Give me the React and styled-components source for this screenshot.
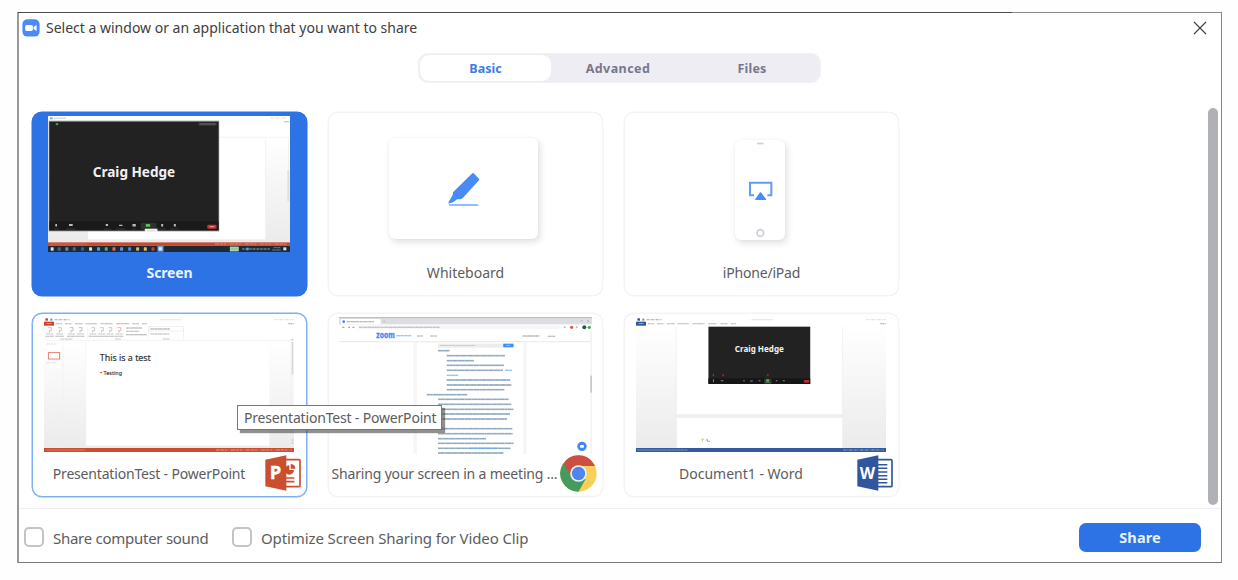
import React from "react";
import styled, { createGlobalStyle } from "styled-components";

const GlobalStyle = createGlobalStyle`
  * { box-sizing: border-box; }
  body { margin: 0; background: #fefefe; font-family: "Noto Sans", "Open Sans", sans-serif; color: #4f4f4f; }
`;

const Page = styled.div`
  width: 1238px;
  height: 580px;
  padding: 12px 16px 16px 17px;
  overflow: hidden;
`;

const Dialog = styled.section`
  width: 1205px;
  height: 551px;
  display: flex;
  flex-direction: column;
  background: #fff;
  border-left: 2px solid #999;
  border-right: 1px solid #868686;
  border-bottom: 1px solid #777;
`;

const TopEdge = styled.div`
  height: 1px;
  flex: none;
  margin-left: -1px;
  background: linear-gradient(90deg, #4c4c4c 994px, #898989 994px);
`;

const TitleBar = styled.header`
  height: 30px;
  flex: none;
  display: flex;
  align-items: center;
  padding: 0 14px 0 3px;
`;

const Text = styled.span`
  font-size: ${(p) => p.$size || 14}px;
  line-height: 20px;
  letter-spacing: ${(p) => p.$track || 0}px;
  font-weight: ${(p) => (p.$bold ? 700 : 400)};
  color: ${(p) => p.$color || "#5c5c60"};
  white-space: nowrap;
`;

const Title = styled(Text)`
  margin-left: 6px;
  flex: 1;
`;

const TabBar = styled.nav`
  width: 403px;
  height: 30px;
  flex: none;
  margin: 10px 0 0 399px;
  padding: 1px;
  display: flex;
  border-radius: 10px;
  background: #ededf3;
  border: 1px solid #f1f1f6;
`;

const Tab = styled.div`
  width: ${(p) => (p.$active ? 131 : 134)}px;
  padding-top: 2px;
  display: flex;
  justify-content: center;
  align-items: center;
  border-radius: 9px;
  background: ${(p) => (p.$active ? "#fff" : "transparent")};
`;

const Body = styled.main`
  height: 426px;
  flex: none;
  display: flex;
  justify-content: space-between;
  padding: 29px 3px 0 13px;
  border-bottom: 1px solid #efeff4;
`;

const Grid = styled.div`
  display: grid;
  grid-template-columns: repeat(3, 275px);
  grid-auto-rows: 184px;
  gap: 17px 21px;
`;

const CARD = {
  selected: ["#2d73e5", "#2d73e5"],
  hover: ["#fff", "#7fb0f0"],
  plain: ["#fff", "#f4f4f6"],
};

const Card = styled.article`
  display: flex;
  flex-direction: column;
  border-radius: 10px;
  background: ${(p) => CARD[p.$kind][0]};
  border: 1px solid ${(p) => CARD[p.$kind][1]};
  box-shadow: 0 0 0 0.5px ${(p) => CARD[p.$kind][1]};
`;

const Media = styled.div`
  height: 140px;
  flex: none;
  display: flex;
  justify-content: center;
  align-items: flex-start;
  padding-top: ${(p) => p.$top}px;
  padding-right: 1px;
  svg { display: block; }
`;

const Caption = styled.div`
  height: 38px;
  display: flex;
  align-items: center;
  padding-right: ${(p) => (p.$icon ? 5 : 0)}px;
  > span { flex: 1; text-align: center; padding-top: 1px; }
  svg { flex: none; }
`;

const Board = styled.div`
  width: 149px;
  height: 101px;
  margin-right: 3px;
  display: flex;
  align-items: center;
  justify-content: center;
  border-radius: 6px;
  background: #fff;
  box-shadow: 2px 3px 7px rgba(0, 0, 0, 0.13), 0 0 2px rgba(0, 0, 0, 0.06);
`;

const Phone = styled(Board)`
  width: 50px;
  height: 100px;
  margin-right: 2px;
`;

const ScrollThumb = styled.div`
  width: 10px;
  height: 397px;
  margin-top: -4px;
  border-radius: 5px;
  background: #b0b0b7;
`;

const Footer = styled.footer`
  flex: 1;
  display: flex;
  align-items: center;
  padding: 3px 20px 0 5px;
`;

const Check = styled.span`
  width: 20px;
  height: 20px;
  margin-right: 9px;
  border: 2px solid #c3c3c8;
  border-radius: 5px;
`;

const CheckLabel = styled.label`
  width: ${(p) => p.$w}px;
  display: flex;
  align-items: center;
  > span + span { padding-top: 2px; }
`;

const ShareButton = styled.button`
  width: 122px;
  height: 29px;
  margin-left: auto;
  padding: 0;
  border: 0;
  border-radius: 7px;
  background: #2d73e5;
  font-family: inherit;
  display: flex;
  align-items: center;
  justify-content: center;
`;

const Tooltip = styled.div`
  position: absolute;
  left: 237px;
  top: 405px;
  width: 205px;
  height: 25px;
  padding: 1px 0 0 6px;
  display: flex;
  align-items: center;
  background: #fff;
  border: 1px solid #777;
  box-shadow: 3px 3px 1px rgba(70, 70, 70, 0.6);
`;

const Dashes = ({ x, y, w, c = "#999", h = 3, d = "6 1 4 2 8 1 3 1" }) => (
  <g stroke={c} strokeWidth={h}>
    <path d={`M${x} ${y}h${w}`} opacity="0.35" />
    <path d={`M${x} ${y}h${w}`} strokeDasharray={d} opacity="0.65" />
  </g>
);

const ZoomIcon = () => (
  <svg width="18" height="18" viewBox="0 0 18 18">
    <rect x="0.4" y="0.2" width="17.2" height="17.4" rx="5" fill="#4a8bf5" />
    <rect x="3.2" y="6" width="7.6" height="6" rx="1.4" fill="#fff" />
    <path d="M11.5 8 14.6 6v6l-3.1-2z" fill="#fff" />
  </svg>
);

const CloseIcon = () => (
  <svg width="14" height="14" viewBox="0 0 14 14" stroke="#444" strokeWidth="1.2">
    <path d="M1 1 13 13M13 1 1 13" />
  </svg>
);

const PenIcon = () => (
  <svg width="33" height="38" viewBox="0 -6 99 114">
    <path
      d="M76 4Q78 2 80 4L96 20Q98 23 96 25L48 77Q43 82 38 82L30 82Q22 91 8 94Q2 96 5 90L17 69L18 61Z"
      fill="#468bf6"
    />
    <path d="M8 99H92" stroke="#70a8fa" strokeWidth="5" strokeLinecap="round" />
  </svg>
);

const PhoneArt = () => (
  <svg width="50" height="100" viewBox="0 0 150 300">
    <path d="M66 10.500H86" stroke="#cfcfdb" strokeWidth="5" />
    <path d="M57 166H45V128H109V166H97" fill="none" stroke="#5f9df9" strokeWidth="6" />
    <path d="M76 157Q78 157 80 160L93 177Q94 180 91 180H63Q60 180 61 177L73 160Q74 157 76 157Z" fill="#468bf6" />
    <circle cx="76" cy="279" r="10" fill="none" stroke="#cfcfdb" strokeWidth="5" />
  </svg>
);

const ScreenThumb = () => {
  const apps = [
    [82, "#ddd"], [103, "#566"], [126, "#789"], [148, "#567"], [173, "#1c6db0"], [197, "#e8e0c8"],
    [221, "#4ba1e8"], [244, "#4fae79"], [267, "#e36a50"], [290, "#5998e8"], [314, "#5687cf"],
    [338, "#cdbd68"], [361, "#e3bf62"], [384, "#b9492e"],
  ];
  return (
    <svg width="242" height="136" viewBox="70 31 725 409" preserveAspectRatio="none">
      <defs>
        <linearGradient id="slideBg" x2="0" y2="1">
          <stop offset="0" stopColor="#fff" />
          <stop offset="1" stopColor="#ebebeb" />
        </linearGradient>
      </defs>
      <rect x="70" y="31" width="725" height="409" fill="#fff" />
      <rect x="70" y="94" width="725" height="318" fill="url(#slideBg)" />
      <rect x="190" y="100" width="532" height="302" fill="#fff" />
      <path d="M584 95H795M722 100V402M791 100V400" stroke="#ececec" strokeWidth="2" />
      <rect x="787" y="194" width="6" height="94" fill="#dedede" />
      <rect x="76" y="35" width="8" height="6" fill="#77a9f5" />
      <Dashes x={88} y={38} w={36} c="#bbb" />
      <Dashes x={738} y={37} w={48} c="#ccc" d="4 14" />
      <Dashes x={777} y={48} w={16} c="#aaa" />
      <rect x="72" y="45" width="511" height="333" fill="#999" />
      <rect x="74" y="48" width="507" height="327" fill="#222" />
      <rect x="93" y="52" width="8" height="7" rx="3" fill="#35a444" />
      <rect x="521" y="51" width="54" height="9" fill="#3b3b3b" />
      <Dashes x={524} y={55} w={48} c="#777" />
      <text x="204" y="214" fontSize="41" fontWeight="700" fill="#f2f2f2" textLength="247" lengthAdjust="spacingAndGlyphs">Craig Hedge</text>
      <rect x="74" y="348" width="507" height="27" fill="#1a1a1a" />
      <rect x="348" y="352" width="47" height="20" fill="#303030" />
      <path d="M92 356h5v7h-5zM133 356h11v6h-11zM243 356h7v6h-7zM283 358h10v4h-10zM323 356h10v7h-10zM409 356h6v7h-6zM447 356h6v7h-6z" fill="#bbb" />
      <rect x="363" y="356" width="13" height="8" fill="#50ce55" />
      <path d="M88 371h14M124 371h29M237 371h22M273 371h28M321 371h12M400 371h23M436 371h26" stroke="#444" strokeWidth="2" />
      <rect x="547" y="358" width="28" height="12" rx="3" fill="#c92c32" />
      <path d="M554 364h14" stroke="#eaa" strokeWidth="3" />
      <rect x="360" y="370" width="38" height="11" fill="#f4f4f4" />
      <path d="M366 376h26" stroke="#ccc" strokeWidth="2" />
      <rect x="70" y="411" width="725" height="10" fill="#c9492b" />
      <Dashes x={76} y={416} w={112} c="#de8a75" h={2} />
      <Dashes x={570} y={416} w={215} c="#e29a88" h={3} d="12 3 9 3 6 12" />
      <rect x="70" y="421" width="725" height="19" fill="#1d2a36" />
      {apps.map(([x, c]) => <rect key={x} x={x - 4} y="426" width="9" height="10" rx="2" fill={c} />)}
      <rect x="398" y="422" width="18" height="17" fill="#6ba5df" />
      <rect x="402" y="426" width="9" height="9" fill="#e3f1fc" />
      <rect x="616" y="425" width="24" height="12" fill="#8fcf8b" stroke="#d4e6d6" strokeWidth="2" />
      <Dashes x={652} y={431} w={82} c="#8599aa" h={5} d="5 6" />
      <rect x="664" y="427" width="7" height="8" fill="#47a4ef" />
      <Dashes x={746} y={427} w={20} c="#bbb" h={2} />
      <Dashes x={742} y={434} w={26} c="#bbb" h={2} />
      <rect x="775" y="426" width="9" height="9" fill="#ddd" />
    </svg>
  );
};

const OfficeHead = ({ color, x0 }) => (
  <g>
    <rect x={x0 + 4} y="31" width="8" height="7" fill={color} />
    <rect x={x0 + 19} y="32" width="6" height="6" fill="#8d7bd0" />
    <Dashes x={x0 + 32} y={35} w={44} c="#8b93a5" d="7 7" />
    <rect x={x0} y="41" width="30" height="12" fill={color} />
    <Dashes x={x0 + 8} y={47} w={15} c="#fff" h={2} d="12 2" />
    {[[36, 18], [63, 19], [93, 23], [125, 34], [170, 35]].map(([x, w]) => (
      <Dashes key={x} x={x0 + x} y={47} w={w} c="#aaa" />
    ))}
    <Dashes x={x0 + 346} y={35} w={64} c="#ddd" />
    <Dashes x={x0 + 690} y={35} w={58} c="#ccc" d="4 14" />
    <Dashes x={x0 + 732} y={47} w={16} c="#999" />
  </g>
);

const SlideThumb = () => (
  <svg width="250" height="135" viewBox="57 27 749 405" preserveAspectRatio="none">
    <rect x="57" y="27" width="749" height="405" fill="#fff" />
    <rect x="57" y="97" width="749" height="323" fill="url(#slideBg)" />
    <OfficeHead color="#cf4426" x0={57} />
    <Dashes x={274} y={47} w={38} c="#df8b78" />
    <Dashes x={321} y={47} w={20} c="#aaa" />
    <Dashes x={351} y={47} w={15} c="#aaa" />
    {[69, 99, 134, 161, 199, 225, 250, 277].map((x, i) => (
      <g key={x}>
        <path d={`M${x} 59h10v9h-7`} fill="none" stroke={i === 2 || i === 3 ? "#8eabc5" : i === 7 ? "#d69a8c" : "#b0b0b0"} strokeWidth="2" />
        <path d={`M${x + 4} 68v6`} stroke="#aaa" strokeWidth="2" />
        <Dashes x={x - 5} y={78} w={20} c="#bbb" />
        <Dashes x={x - 8} y={85} w={26} c="#aaa" />
      </g>
    ))}
    <Dashes x={303} y={60} w={48} c="#999" />
    <Dashes x={303} y={70} w={40} c="#aaa" />
    <Dashes x={303} y={80} w={62} c="#999" />
    <rect x="372" y="56" width="103" height="13" fill="none" stroke="#e5e5e5" strokeWidth="1.500" />
    <Dashes x={376} y={63} w={58} c="#8093a5" />
    <Dashes x={376} y={78} w={56} c="#aaa" />
    <path d="M57 97H806M188 57v36M370 57v36M475 57v36" stroke="#e6e6e6" strokeWidth="1.500" />
    <Dashes x={106} y={93} w={36} c="#bbb" />
    <Dashes x={271} y={93} w={16} c="#bbb" />
    <Dashes x={413} y={93} w={20} c="#bbb" />
    <rect x="182" y="104" width="550" height="309" fill="#fff" />
    <path d="M114 100V420M182 104V412" stroke="#eee" strokeWidth="1.500" />
    <rect x="71" y="106" width="33" height="18" fill="#fff" />
    <rect x="70" y="134" width="34" height="19" fill="#fff" stroke="#dd6c53" strokeWidth="2.500" />
    <rect x="71" y="162" width="33" height="18" fill="#fff" />
    <Dashes x={64} y={108} w={30} c="#ddd" />
    <Dashes x={64} y={164} w={28} c="#ddd" />
    <text x="224" y="158" fontSize="25" fill="#333" stroke="#333" strokeWidth=".5" textLength="153" lengthAdjust="spacingAndGlyphs">This is a test</text>
    <text x="225" y="202" fontSize="18" fill="#333" stroke="#333" strokeWidth=".4" textLength="66" lengthAdjust="spacingAndGlyphs">• Testing</text>
    <rect x="799" y="102" width="5" height="98" fill="#d8d8d8" />
    <path d="M797 100v310" stroke="#e9e9e9" />
    <path d="M798 95h6M799 396h5M799 405h5" stroke="#999" strokeWidth="2" />
    <rect x="57" y="420" width="749" height="12" fill="#cb4c2f" />
    <Dashes x={64} y={426} w={115} c="#e08b74" h={3} />
    <Dashes x={572} y={426} w={228} c="#eba995" h={3} d="12 3 9 3 6 12" />
  </svg>
);

const BROWSER_LINES = [
  [354, 126, 34], [380, 141, 174], [380, 156, 81], [380, 170, 171], [380, 185, 168], [380, 214, 190],
  [380, 229, 193], [380, 243, 172], [320, 258, 121], [354, 272, 211], [354, 287, 219], [354, 302, 225],
  [354, 316, 215], [354, 331, 206], [354, 360, 222], [354, 375, 223], [354, 390, 143], [354, 404, 226],
  [354, 419, 217], [354, 433, 195],
];

const BrowserThumb = () => (
  <svg width="253" height="137" viewBox="57 25 758 411" preserveAspectRatio="none">
    <rect x="57" y="25" width="758" height="411" fill="#fff" />
    <rect x="57" y="25" width="758" height="22" fill="#dcdee2" />
    <path d="M57 27H815" stroke="#aaa" strokeWidth="2" />
    <rect x="62" y="31" width="120" height="16" rx="3" fill="#fff" />
    <circle cx="71" cy="39" r="4" fill="#4285f4" />
    <Dashes x={80} y={39} w={82} c="#8e9299" />
    <path d="M189 38h7M780 37h8M800 34l7 7M807 34l-7 7" stroke="#999" strokeWidth="1.500" />
    <path d="M66 56h7M84 56h6M97 56h7" stroke="#999" strokeWidth="3" />
    <rect x="111" y="50" width="610" height="12" rx="6" fill="#f7f7f8" />
    <Dashes x={117} y={56} w={242} c="#a5a5a5" h={3} />
    <circle cx="733" cy="56" r="3" fill="#bbb" />
    <circle cx="754" cy="56" r="5" fill="#df5b55" /><circle cx="769" cy="56" r="3" fill="#bbb" />
    <circle cx="792" cy="56" r="6" fill="#265b4a" /><circle cx="807" cy="56" r="5" fill="#54a959" />
    <text x="169" y="88" fontSize="24" fontWeight="700" fill="#3f87f5" stroke="#3f87f5" strokeWidth="1" textLength="55" lengthAdjust="spacingAndGlyphs">zoom</text>
    <Dashes x={229} y={81} w={44} c="#80b2f5" h={4} />
    <Dashes x={291} y={82} w={17} c="#999" /><Dashes x={331} y={82} w={19} c="#999" />
    <Dashes x={607} y={82} w={50} c="#888" /><Dashes x={683} y={83} w={22} c="#999" />
    <path d="M57 99H815" stroke="#dcdcdc" strokeWidth="2" />
    <path d="M285 101V436M614 101V436" stroke="#f5f5f5" strokeWidth="10" />
    <rect x="354" y="105" width="195" height="12" fill="#ededed" />
    <Dashes x={360} y={111} w={105} c="#aaa" h={2} />
    <rect x="549" y="105" width="31" height="11" fill="#3f8cf4" />
    <path d="M557 110h14" stroke="#bddafd" strokeWidth="2" />
    {BROWSER_LINES.map(([x, y, w], i) => (
      <g key={y}>
        <Dashes x={x} y={y} w={w} c="#d4e0e9" h={6} d="200 1" />
        <Dashes x={x} y={y} w={w} c="#7c98b0" h={4} d={i % 2 ? "7 1 10 2 5 1 12 2" : "9 1 6 2 12 1 4 1"} />
      </g>
    ))}
    <Dashes x={555} y={185} w={20} c="#68aff4" h={4} /><Dashes x={380} y={200} w={34} c="#68aff4" h={4} />
    <Dashes x={450} y={419} w={81} c="#68aff4" h={4} />
    <rect x="810" y="67" width="6" height="369" fill="#f3f3f3" />
    <rect x="810" y="201" width="6" height="51" fill="#c7c7c7" />
    <circle cx="785" cy="413" r="14" fill="#4387f5" />
    <rect x="779" y="409" width="12" height="8" rx="3" fill="#fff" />
  </svg>
);

const WordThumb = () => (
  <svg width="250" height="135" viewBox="48 27 749 405" preserveAspectRatio="none">
    <rect x="48" y="27" width="749" height="405" fill="#fff" />
    <rect x="48" y="55" width="749" height="365" fill="url(#slideBg)" />
    <OfficeHead color="#2c589e" x0={48} />
    <Dashes x={264} y={47} w={25} c="#aaa" /><Dashes x={301} y={47} w={21} c="#aaa" /><Dashes x={332} y={47} w={16} c="#aaa" />
    <rect x="170" y="54" width="497" height="265" fill="#fff" />
    <rect x="170" y="319" width="497" height="11" fill="#f0f0f0" />
    <rect x="170" y="330" width="497" height="90" fill="#fff" />
    <path d="M168 55V420M667 55V420" stroke="#ededed" strokeWidth="2" />
    <rect x="265" y="56" width="305" height="172" fill="#222" />
    <text x="344" y="131" fontSize="25" fontWeight="700" fill="#f2f2f2" textLength="147" lengthAdjust="spacingAndGlyphs">Craig Hedge</text>
    <path d="M280 198v9M309 198v9M443 198v9" stroke="#b82229" strokeWidth="4" strokeDasharray="6 2" />
    <rect x="265" y="211" width="305" height="17" fill="#161616" />
    <path d="M280 214v9M302 218h8M369 218h5M390 219h8M415 218h6M467 218h5M488 218h6" stroke="#888" strokeWidth="3" />
    <rect x="432" y="212" width="22" height="15" fill="#343434" /><rect x="438" y="214" width="9" height="7" fill="#48bf50" />
    <path d="M434 224h18" stroke="#777" strokeWidth="2" />
    <rect x="551" y="216" width="16" height="8" rx="2" fill="#bf2c32" />
    <path d="M243 394h9M247 397v4" stroke="#e3bd7c" strokeWidth="3" />
    <path d="M258 397l4-3v7M264 400h6" stroke="#777" strokeWidth="2" fill="none" />
    <rect x="48" y="420" width="749" height="12" fill="#345b9f" />
    <Dashes x={52} y={426} w={150} c="#8aa2cc" h={3} />
    <Dashes x={670} y={426} w={120} c="#a4b7d8" h={3} d="6 12 7 8" />
  </svg>
);

const PowerPointIcon = () => (
  <svg width="36" height="36" viewBox="0 0 108 108">
    <rect x="58" y="14" width="47" height="81" rx="3" fill="#fff" stroke="#c94f2f" strokeWidth="5" />
    <path d="M73 31a14 14 0 1 0 14 14H73z" fill="#c94f2f" />
    <path d="M77 27a14 14 0 0 1 14 14H77z" fill="#c94f2f" />
    <path d="M62 69H88M62 80H88" stroke="#c94f2f" strokeWidth="5" />
    <path d="M1 14 64 1V107L1 94Z" fill="#c94f2f" />
    <text x="14" y="73" fontFamily="Open Sans, sans-serif" fontSize="55" fontWeight="700" fill="#fff" stroke="#fff" strokeWidth="1">P</text>
  </svg>
);

const WordIcon = () => (
  <svg width="36" height="36" viewBox="0 0 108 108">
    <rect x="58" y="14" width="47" height="81" rx="3" fill="#fff" stroke="#30579b" strokeWidth="5" />
    <path d="M60 29H91M60 40H91M60 51H91M60 62H91M60 73H91M60 83H91" stroke="#30579b" strokeWidth="4.500" />
    <path d="M1 14 64 1V107L1 94Z" fill="#30579b" />
    <text x="8" y="72" fontFamily="Open Sans, sans-serif" fontSize="49" fontWeight="700" fill="#fff" textLength="46" lengthAdjust="spacingAndGlyphs">W</text>
  </svg>
);

const ChromeIcon = () => (
  <svg width="37" height="37" viewBox="0 0 111 111">
    <circle cx="55.500" cy="55.500" r="54.500" fill="#f7cf59" />
    <path d="M8.300 28.200A54.500 54.500 0 0 1 102.700 28.200L105 33H55.500L34 68Z" fill="#cb4f43" />
    <path d="M10 25A54.500 54.500 0 0 0 55.500 110L77 72L36 68Z" fill="#459b5e" />
    <circle cx="55.500" cy="55.500" r="25" fill="#eef1ee" />
    <circle cx="55.500" cy="55.500" r="20" fill="#4f86ec" />
  </svg>
);

const ITEMS = [
  { label: "Screen", kind: "selected", top: 3, art: <ScreenThumb />, bold: true, color: "#eaf2ff", track: -0.15 },
  { label: "Whiteboard", kind: "plain", top: 25, art: <Board><PenIcon /></Board>, track: 0 },
  { label: "iPhone/iPad", kind: "plain", top: 27, art: <Phone><PhoneArt /></Phone>, track: -0.2 },
  { label: "PresentationTest - PowerPoint", kind: "hover", top: 3, art: <SlideThumb />, icon: <PowerPointIcon />, track: -0.18 },
  { label: "Sharing your screen in a meeting ...", kind: "plain", top: 2.5, art: <BrowserThumb />, icon: <ChromeIcon />, track: -0.18 },
  { label: "Document1 - Word", kind: "plain", top: 3, art: <WordThumb />, icon: <WordIcon />, track: 0 },
];

export default function App() {
  return (
    <Page>
      <GlobalStyle />
      <Dialog>
        <TopEdge />
        <TitleBar>
          <ZoomIcon />
          <Title $size={14} $color="#404040">Select a window or an application that you want to share</Title>
          <CloseIcon />
        </TitleBar>
        <TabBar>
          <Tab $active><Text $bold $size={12.5} $color="#3b7de9">Basic</Text></Tab>
          <Tab><Text $bold $size={12.5} $track={0.45} $color="#77778c">Advanced</Text></Tab>
          <Tab><Text $bold $size={12.5} $track={0.2} $color="#77778c">Files</Text></Tab>
        </TabBar>
        <Body>
          <Grid>
            {ITEMS.map((it) => (
              <Card key={it.label} $kind={it.kind}>
                <Media $top={it.top}>{it.art}</Media>
                <Caption $icon={!!it.icon}>
                  <Text $bold={it.bold} $color={it.color} $track={it.track}>{it.label}</Text>
                  {it.icon}
                </Caption>
              </Card>
            ))}
          </Grid>
          <ScrollThumb />
        </Body>
        <Footer>
          <CheckLabel $w={208}><Check /><Text $size={15} $track={-0.27}>Share computer sound</Text></CheckLabel>
          <CheckLabel><Check /><Text $size={15} $track={-0.11}>Optimize Screen Sharing for Video Clip</Text></CheckLabel>
          <ShareButton><Text $bold $size={14.5} $track={0.1} $color="#eaf2ff">Share</Text></ShareButton>
        </Footer>
      </Dialog>
      <Tooltip><Text $track={-0.18}>PresentationTest - PowerPoint</Text></Tooltip>
    </Page>
  );
}
